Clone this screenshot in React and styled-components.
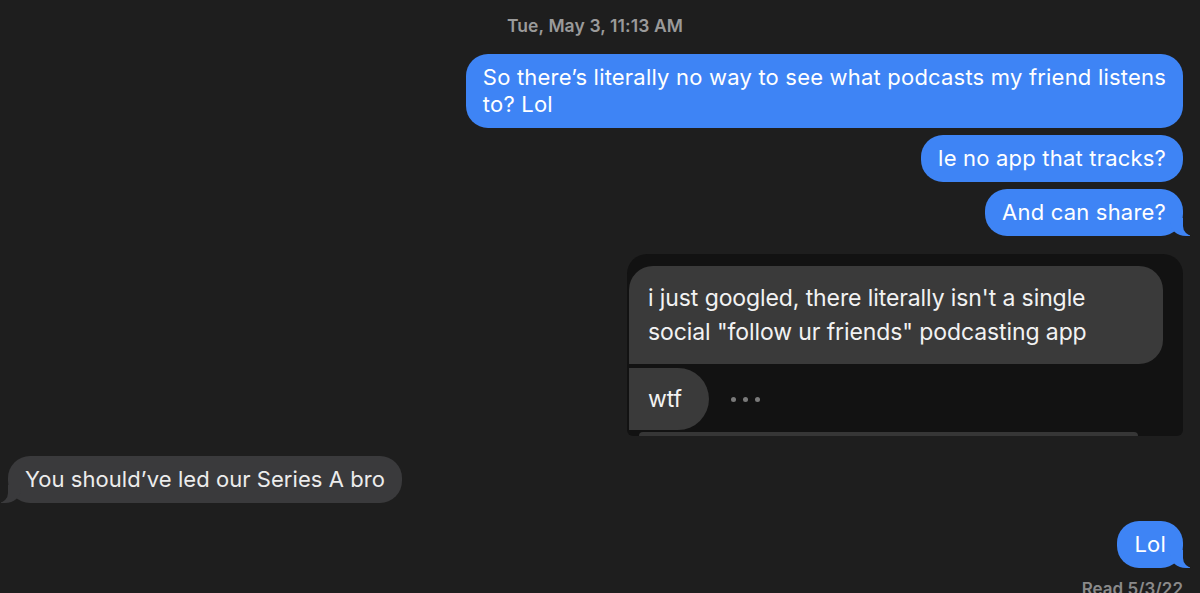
import React from "react";
import styled, { createGlobalStyle, css } from "styled-components";

const BG = "#1e1e1e";
const BLUE = "#3e84f5";
const GRAY = "#3a3a3c";

const Global = createGlobalStyle`
  html, body { margin: 0; padding: 0; background: ${BG}; }
  body { font-family: Inter, "Noto Sans", sans-serif; -webkit-font-smoothing: antialiased; }
`;

const Page = styled.div`
  width: 1200px;
  height: 593px;
  overflow: hidden;
  background: ${BG};
  display: flex;
  flex-direction: column;
`;

const Stamp = styled.div`
  align-self: center;
  margin: 16px 10px 0 0;
  font-size: 17.5px;
  line-height: 20px;
  font-weight: 600;
  color: #9a9a9a;
  letter-spacing: 0.1px;
`;

const Thread = styled.div`
  display: flex;
  flex-direction: column;
  align-items: ${(p) => (p.$side === "left" ? "flex-start" : "flex-end")};
  gap: 7px;
  padding: ${(p) => (p.$side === "left" ? "0 0 0 8px" : "0 17px 0 0")};
  margin-top: ${(p) => p.$top || 0}px;
`;

const tail = (side, color) => css`
  &::before {
    content: "";
    position: absolute;
    bottom: 0;
    ${side}: -7px;
    width: 20px;
    height: 18px;
    background: ${color};
    ${side === "right"
      ? "border-bottom-left-radius: 16px 14px;"
      : "border-bottom-right-radius: 16px 14px;"}
  }
  &::after {
    content: "";
    position: absolute;
    bottom: 0;
    ${side}: -26px;
    width: 26px;
    height: 20px;
    background: ${BG};
    ${side === "right"
      ? "border-bottom-left-radius: 10px;"
      : "border-bottom-right-radius: 10px;"}
  }
`;

const Bubble = styled.div`
  position: relative;
  white-space: nowrap;
  font-size: 22px;
  line-height: 27px;
  letter-spacing: ${(p) => (p.$incoming ? "0.05px" : "0.2px")};
  padding: 10px 17px 10px 17px;
  border-radius: 22px;
  color: ${(p) => (p.$incoming ? "#ececec" : "#ffffff")};
  background: ${(p) => (p.$incoming ? GRAY : BLUE)};
  z-index: 0;
  ${(p) => p.$tail && tail(p.$incoming ? "left" : "right", p.$incoming ? GRAY : BLUE)}
  & > span { position: relative; z-index: 1; }
`;

const Shot = styled.div`
  margin-top: 11px;
  width: 556px;
  height: 182px;
  box-sizing: border-box;
  background: #121212;
  border-radius: 20px 20px 6px 6px;
  padding: 12px 0 0 2px;
  display: flex;
  flex-direction: column;
  overflow: hidden;
`;

const ShotBubble = styled.div`
  align-self: flex-start;
  box-sizing: border-box;
  background: #3a3a3a;
  color: #f2f2f2;
  font-family: Inter, "Noto Sans", sans-serif;
  font-size: 23px;
  line-height: 34px;
  letter-spacing: -0.1px;
  white-space: nowrap;
  width: ${(p) => (p.$small ? "auto" : "534px")};
  padding: ${(p) => (p.$small ? "14px 27px 14px 19px" : "15px 20px 15px 19px")};
  border-radius: ${(p) => (p.$small ? "0 31px 31px 0" : "24px 24px 24px 0")};
`;

const ShotRow = styled.div`
  margin-top: 4px;
  display: flex;
  align-items: center;
  gap: 22px;
`;

const Dots = styled.div`
  display: flex;
  gap: 7px;
  & > i {
    width: 5px;
    height: 5px;
    border-radius: 50%;
    background: #7a7a7a;
  }
`;

const ShotEdge = styled.div`
  margin: 2px 45px 0 10px;
  height: 4px;
  border-radius: 6px 6px 0 0;
  background: #363636;
`;

const Read = styled.div`
  margin-top: 11px;
  align-self: flex-end;
  margin-right: 17px;
  font-size: 17px;
  line-height: 20px;
  font-weight: 600;
  color: #8a8a8a;
`;

export default function App() {
  return (
    <Page>
      <Global />
      <Stamp>Tue, May 3, 11:13 AM</Stamp>
      <Thread $top={18}>
        <Bubble $lines={2}>
          <span>
            So there’s literally no way to see what podcasts my friend listens
            <br />
            to? Lol
          </span>
        </Bubble>
        <Bubble>
          <span>le no app that tracks?</span>
        </Bubble>
        <Bubble $tail>
          <span>And can share?</span>
        </Bubble>
        <Shot>
          <ShotBubble>
            i just googled, there literally isn't a single
            <br />
            social "follow ur friends" podcasting app
          </ShotBubble>
          <ShotRow>
            <ShotBubble $small>wtf</ShotBubble>
            <Dots>
              <i />
              <i />
              <i />
            </Dots>
          </ShotRow>
          <ShotEdge />
        </Shot>
      </Thread>
      <Thread $side="left" $top={20}>
        <Bubble $incoming $tail>
          <span>You should’ve led our Series A bro</span>
        </Bubble>
      </Thread>
      <Thread $top={18}>
        <Bubble $tail>
          <span>Lol</span>
        </Bubble>
      </Thread>
      <Read>Read 5/3/22</Read>
    </Page>
  );
}
